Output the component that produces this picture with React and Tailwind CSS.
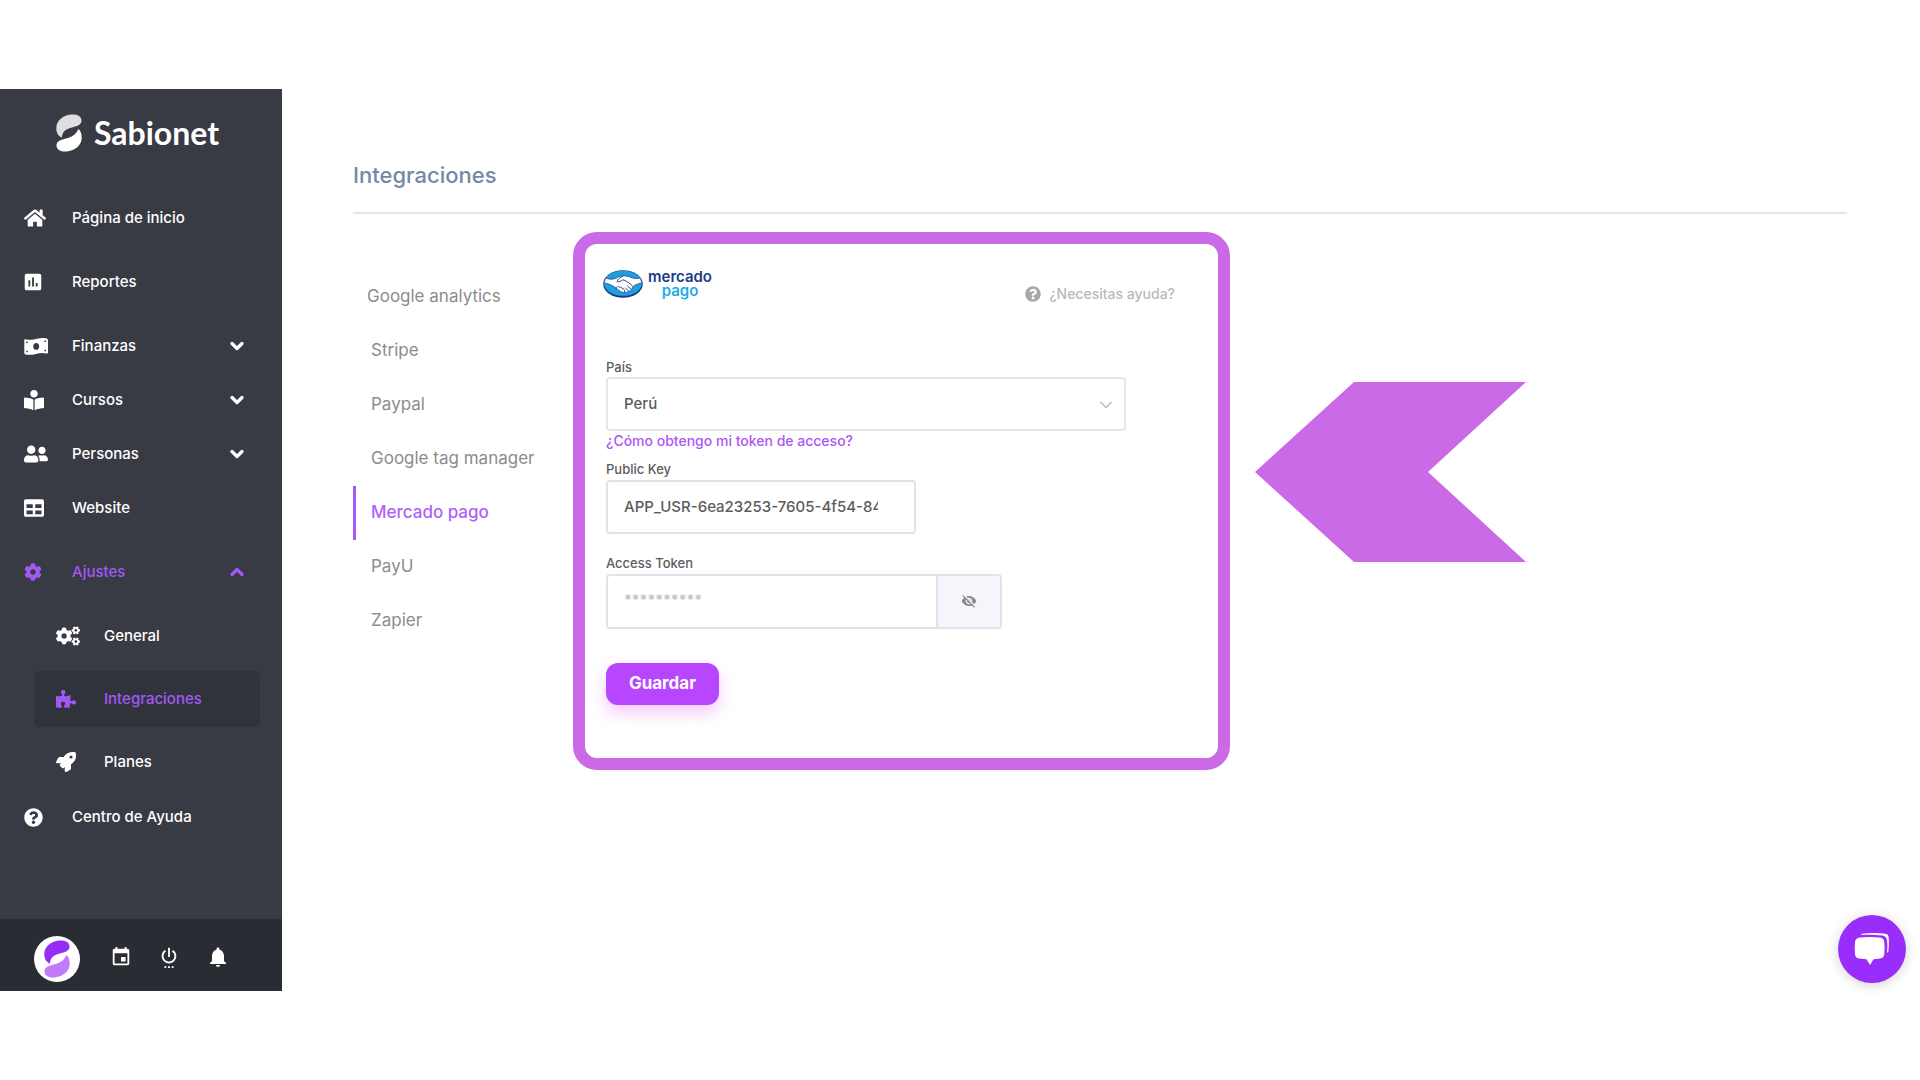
import React from "react";
import { ChevronDown, ChevronUp } from "lucide-react";
import {
  FaHome,
  FaBookReader,
  FaUserFriends,
  FaTable,
  FaCog,
  FaCogs,
  FaPuzzlePiece,
  FaRocket,
  FaQuestionCircle,
} from "react-icons/fa";
import {
  MdPoll,
  MdEvent,
  MdSettingsPower,
  MdNotifications,
  MdVisibilityOff,
} from "react-icons/md";

function SabionetMark({ className, top, bottom }) {
  return (
    <svg viewBox="0 0 26 38" className={className} aria-hidden="true">
      <path
        d="M25.5 6 C25 1.5 20 0 15 .6 C6.500 1.500 .4 7 .3 14 C.2 18.500 2 22 6 23.600 C6 18.500 9 15.500 14 14 C20 12.400 26 11.500 25.500 6 Z"
        fill={top}
      />
      <path
        d="M.5 32 C1 36.500 6 38 11 37.400 C19.500 36.500 25.600 31 25.700 24 C25.800 19.500 24.500 16.800 22.500 15 C20.500 19.500 17 22.500 12 24 C6 25.600 0 26.500 .5 32 Z"
        fill={bottom}
      />
    </svg>
  );
}

function MoneyIcon({ className }) {
  return (
    <svg viewBox="0 0 24 17" className={className} aria-hidden="true">
      <path
        fill="currentColor"
        fillRule="evenodd"
        d="M.3 2.200 Q0 1 1.400 1.200 C6 2.200 9 2 13 .8 C17 -.2 20 -.1 22.500 .5 Q24 .8 24 2 L24 14.500 Q24 15.800 22.600 15.500 C19 14.600 16 14.700 12 15.900 C8 17 5 17 1.500 16.400 Q.3 16.200 .3 15 Z M12.200 5 C10.400 5 9.200 6.500 9.200 8.400 C9.200 10.300 10.400 11.800 12.200 11.800 C14 11.800 15.200 10.300 15.200 8.400 C15.200 6.500 14 5 12.200 5 Z M2.200 3.500 V5 H3.700 V3.500 Z M20.500 2.500 V4 H22 V2.500 Z M2.200 12.800 V14.300 H3.700 V12.800 Z M20.500 11.800 V13.300 H22 V11.800 Z"
      />
    </svg>
  );
}

function HandshakeLogo({ className }) {
  return (
    <svg viewBox="0 0 40 28" className={className} aria-hidden="true">
      <ellipse cx="20" cy="14" rx="19.800" ry="13.700" fill="#1b3a80" />
      <ellipse cx="20" cy="13.300" rx="19" ry="12.500" fill="#1c9fdc" />
      <path
        d="M2.500 8 C8 10 11 9.500 15 7 L20 5.600 L26 6.500 C30 8.600 33 9 37.500 8 L38.800 13 C34 14 31 15 30 17 C29 20 26 22 22.500 22.500 C19 23 16 20.500 13 18 C9 15 5 13.500 1.200 13 Z"
        fill="#fff"
        stroke="#1b3a80"
        strokeWidth=".7"
      />
      <path
        d="M20 6 C17 7 15.500 9 14 11.500 C16 12.500 18 11 20 9.800 C24 11 27 13.500 30 16.500 M13 18 C14 16 16 16 16.500 17.500 C18 16.500 19.500 17.500 19.500 19 C21 18.500 22 20 21.500 22 M28 19 L24.500 16 M25.500 21 L22.500 18"
        fill="none"
        stroke="#1b3a80"
        strokeWidth=".9"
        strokeLinecap="round"
      />
    </svg>
  );
}

function ChatIcon({ className }) {
  return (
    <svg viewBox="0 0 36 34" className={className} aria-hidden="true">
      <path
        fill="#fff"
        d="M6 5.500 C12 4.700 20 4.700 26 5.500 Q30 6 30.300 10 C30.700 14 30.700 18 30.300 22 Q30 26 26 26.600 L19.500 27.200 L16 33 L12.500 27.200 L5 26.600 Q1.300 26 1 22 C.6 18 .6 14 1 10 Q1.300 6 6 5.500 Z"
      />
      <path
        d="M8 1.700 C15 .9 24 .9 31 1.700 Q34.400 2 34.700 5.500 C35 10 35 15 34.200 20.500 L33 20.500 C33.600 15 33.500 12 33 8.500 Q32.500 4.300 28.500 3.600 C22 2.700 14 2.600 7 3 Z"
        fill="#fff"
      />
    </svg>
  );
}

const NAV = [
  { label: "Página de inicio", icon: FaHome, size: "size-[22px]", gap: true },
  { label: "Reportes", icon: MdPoll, size: "size-[22px] -ml-0.5", gap: true },
  { label: "Finanzas", icon: MoneyIcon, size: "h-[17px] w-6", arrow: "down" },
  { label: "Cursos", icon: FaBookReader, size: "size-5", arrow: "down" },
  { label: "Personas", icon: FaUserFriends, size: "size-6", arrow: "down" },
  { label: "Website", icon: FaTable, size: "size-5", gap: true },
  { label: "Ajustes", icon: FaCog, size: "size-[18px]", arrow: "up", active: true, gap: true },
];

const SUBNAV = [
  { label: "General", icon: FaCogs },
  { label: "Integraciones", icon: FaPuzzlePiece, active: true },
  { label: "Planes", icon: FaRocket },
];

const TABS = [
  "Google analytics",
  "Stripe",
  "Paypal",
  "Google tag manager",
  "Mercado pago",
  "PayU",
  "Zapier",
];

function NavItem({ item }) {
  const Icon = item.icon;
  return (
    <li className={item.gap ? "mb-2.5" : ""}>
      <a
        href="#"
        className={
          "flex h-[54px] items-center pl-6 pr-[35px] " +
          (item.active ? "text-[#a259f2]" : "text-white")
        }
      >
        <span className="flex w-12 shrink-0 items-center">
          <Icon className={item.size} />
        </span>
        <span className="flex-1">{item.label}</span>
        {item.arrow === "down" && <ChevronDown className="size-5" strokeWidth={4} />}
        {item.arrow === "up" && <ChevronUp className="size-5" strokeWidth={4} />}
      </a>
    </li>
  );
}

function Sidebar() {
  return (
    <aside className="flex w-[282px] shrink-0 flex-col bg-[#383a44] text-[15px] font-medium text-white">
      <div className="flex items-center gap-3 pl-14 pt-6">
        <SabionetMark className="h-[38px] w-[26px]" top="#dedede" bottom="#ffffff" />
        <span className="font-[Lato] text-[32px] font-bold leading-10">Sabionet</span>
      </div>
      <nav className="mt-[38px] flex-1">
        <ul>
          {NAV.map((item) => (
            <NavItem key={item.label} item={item} />
          ))}
          {SUBNAV.map(({ label, icon: Icon, active }) => (
            <li key={label} className={label === "Planes" ? "-mt-px" : "-mt-px mb-2"}>
              <a
                href="#"
                className={
                  "ml-[34px] mr-[22px] flex h-14 items-center rounded-md pl-[22px] " +
                  (active ? "bg-[#31333c] text-[#a259f2]" : "text-white")
                }
              >
                <span className="flex w-12 shrink-0 items-center">
                  <Icon className={label === "General" ? "size-6" : "size-5"} />
                </span>
                {label}
              </a>
            </li>
          ))}
          <NavItem item={{ label: "Centro de Ayuda", icon: FaQuestionCircle, size: "size-[19px]" }} />
        </ul>
      </nav>
      <div className="flex h-[72px] items-center gap-6 bg-[#2a2c34] pl-[34px] pt-1">
        <button
          aria-label="Perfil"
          className="mr-1.5 mt-1 flex size-[46px] items-center justify-center rounded-full bg-white"
        >
          <SabionetMark className="h-[38px] w-[26px]" top="#962cf8" bottom="#c17afb" />
        </button>
        <button aria-label="Calendario">
          <MdEvent className="size-[22px]" />
        </button>
        <button aria-label="Salir" className="ml-0.5">
          <MdSettingsPower className="size-[22px]" />
        </button>
        <button aria-label="Notificaciones" className="ml-0.5">
          <MdNotifications className="size-6" />
        </button>
      </div>
    </aside>
  );
}

function PaymentForm() {
  return (
    <section className="w-full max-w-[657px] rounded-3xl border-12 border-[#ca6ae6] pb-[53px] pl-[21px] pr-[43px] pt-[22px] text-sm font-medium text-[#5c5c5c]">
      <form onSubmit={(e) => e.preventDefault()}>
        <div className="flex h-10 items-start justify-between">
          <div className="-ml-[3px] flex items-center gap-[5px] pt-1">
            <HandshakeLogo className="h-7 w-10" />
            <div className="flex flex-col items-center text-[15px] font-semibold leading-[14px] text-[#1d3c85]">
              <span>mercado</span>
              <span className="text-[#1cace8]">pago</span>
            </div>
          </div>
          <a href="#" className="mt-[18px] flex items-center gap-2 text-sm leading-5 text-[#bcb9b9]">
            <FaQuestionCircle className="size-4 text-[#aaa7a7]" />
            ¿Necesitas ayuda?
          </a>
        </div>

        <label htmlFor="country" className="mt-[51px] block text-[13px] leading-5">
          País
        </label>
        <div className="relative mr-[49px]">
          <select
            id="country"
            className="h-[54px] w-full appearance-none rounded border-2 border-[#e6e6e8] bg-white px-4 text-[15px]"
          >
            <option>Perú</option>
          </select>
          <ChevronDown
            className="pointer-events-none absolute right-2.5 top-[18px] size-5 text-[#bdbdbd]"
            strokeWidth={2}
          />
        </div>
        <a href="#" className="block text-sm leading-5 text-[#ae55f6]">
          ¿Cómo obtengo mi token de acceso?
        </a>

        <label htmlFor="public-key" className="mt-2 block text-[13px] leading-[21px]">
          Public Key
        </label>
        <input
          id="public-key"
          defaultValue="APP_USR-6ea23253-7605-4f54-84c1"
          className="block h-[54px] w-[310px] rounded border-2 border-[#e2e2ea] pb-0.5 pl-4 pr-9 text-[15px]"
        />

        <label htmlFor="access-token" className="mt-[19px] block text-[13px] leading-[21px]">
          Access Token
        </label>
        <div className="flex h-[55px] w-[396px] overflow-hidden rounded border-2 border-[#e2e2ea]">
          <input
            id="access-token"
            type="password"
            placeholder="**********"
            className="min-w-0 flex-1 px-4 pb-1 text-[15px] placeholder:text-[#bdbfca]"
          />
          <button
            type="button"
            aria-label="Mostrar token"
            className="flex w-16 items-center justify-center border-l-2 border-[#e2e2ea] bg-[#f5f6fb] pb-0.5 text-[#8a8a90]"
          >
            <MdVisibilityOff className="size-4" />
          </button>
        </div>

        <button
          type="submit"
          className="mt-[34px] block h-[42px] w-[113px] rounded-xl bg-[#b946ff] pb-0.5 text-[17px] font-bold text-white shadow-[0_8px_16px_rgba(214,70,255,0.28)]"
        >
          Guardar
        </button>
      </form>
    </section>
  );
}

export default function App() {
  return (
    <div className="relative flex min-h-screen bg-white py-[89px] font-[Inter,sans-serif]">
      <Sidebar />
      <main className="min-w-0 flex-1 pl-[71px] pr-[73px] pt-[72px]">
        <h1 className="border-b-2 border-[#e6e6e8] pb-[23px] text-[22px] font-medium leading-7 text-[#7488a8]">
          Integraciones
        </h1>
        <div className="mt-[18px] flex items-start">
          <nav className="w-[220px] shrink-0 pt-[38px]">
            {TABS.map((tab) => (
              <a
                key={tab}
                href="#"
                className={
                  "flex h-[54px] items-center border-l-3 text-[17px] " +
                  (tab === "Google analytics" ? "pl-[11px] " : "pl-[15px] ") +
                  (tab === "Mercado pago"
                    ? "border-[#a259f7] font-medium text-[#b061f7]"
                    : "border-transparent text-[#8c8c8c]")
                }
              >
                {tab}
              </a>
            ))}
          </nav>
          <PaymentForm />
          <svg
            viewBox="0 0 271 180"
            className="ml-[25px] mt-[150px] w-[271px] shrink-0"
            aria-hidden="true"
          >
            <path d="M0 90 L99 0 H271 L173 90 L271 180 H99 Z" fill="#ca6ae6" />
          </svg>
        </div>
      </main>
      <button
        aria-label="Chat"
        className="absolute bottom-[97px] right-3.5 flex size-[68px] items-center justify-center rounded-full bg-[#992dfb] shadow-[0_2px_12px_rgba(0,0,0,0.18)]"
      >
        <ChatIcon className="h-[34px] w-9" />
      </button>
    </div>
  );
}
